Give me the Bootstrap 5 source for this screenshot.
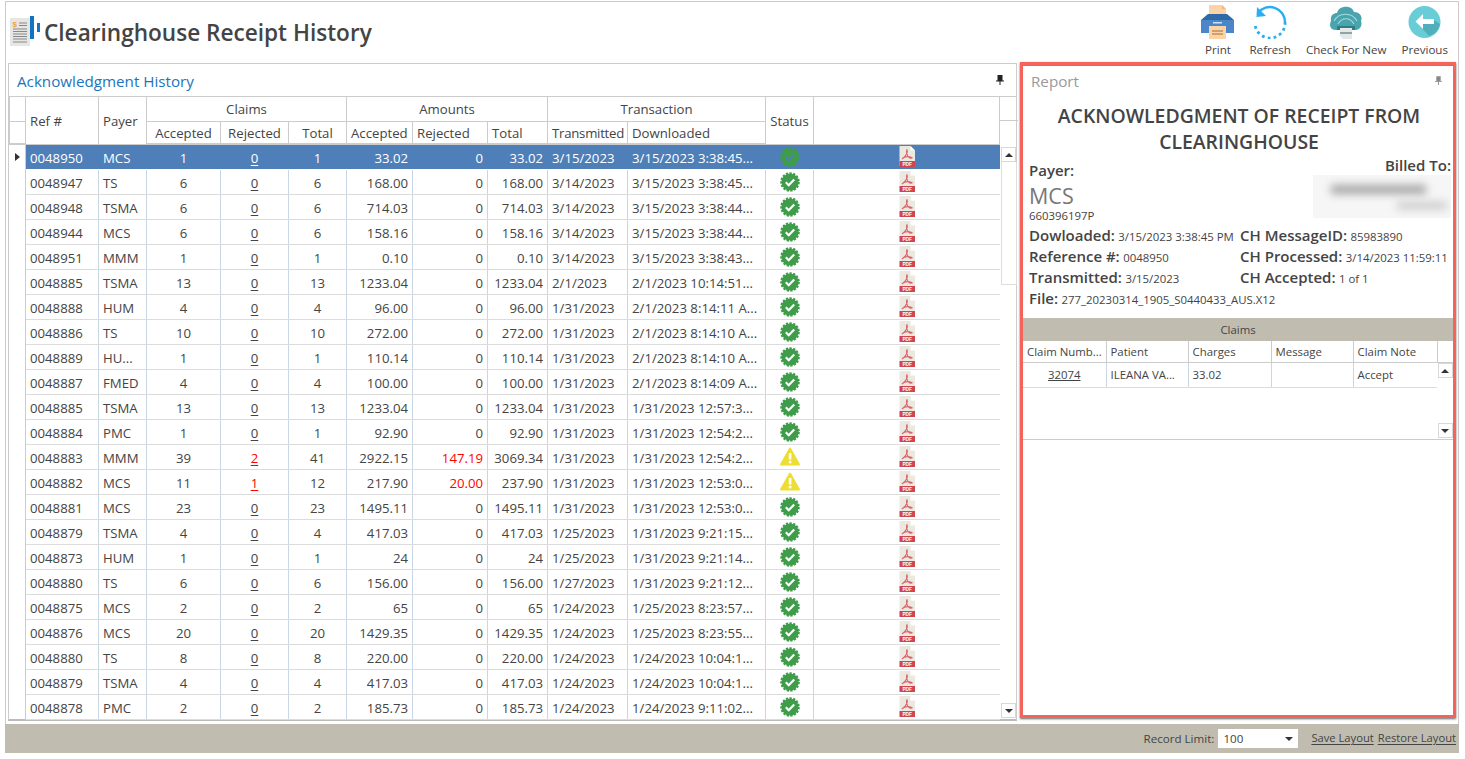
<!DOCTYPE html>
<html lang="en">
<head>
<meta charset="utf-8">
<title>Clearinghouse Receipt History</title>
<link href="https://cdn.jsdelivr.net/npm/bootstrap@5.3.0/dist/css/bootstrap.min.css" rel="stylesheet">
<style>
html,body{height:100%;overflow:hidden;background:#fff}
body{font-family:"Open Sans","Noto Sans",sans-serif;font-size:13.2px;color:#444;padding:1px 6px 0 5px}
.app-frame{height:723px;border:1px solid #ccc;border-bottom:0;padding-left:2px;padding-right:2px}
.top-bar{height:60px}
.title-wrap{padding:14px 0 0 2px}
.title-ico{margin-right:4px}
.app-title{font-size:22.6px;font-weight:600;color:#444;margin:0;line-height:1;padding-top:4px}
.tool-item{color:#444;font-size:11.6px;text-decoration:none;line-height:1;gap:5px}
.tool-strip{gap:15px;padding-right:8px;padding-top:3px}
.tool-item svg{display:block}
.main-row{height:660px}
.hist-panel{width:1009px;height:658px;margin-top:1px;border:1px solid #ccc;border-bottom:2px solid #bbb;background:#fff}
.panel-head{height:32px;padding:0 8px;flex:none}
.hist-title{font-size:15.2px;color:#1b75bc;padding-top:2px}
.hist-pin{margin-right:4px;margin-top:-1px;color:#222}
.rep-title{font-size:15.2px;color:#999;padding-top:2px}
.rep-pin{color:#888;margin-right:1px}
.grid-wrap{border-top:1px solid #ccc;flex:1;min-height:0}
.hist-table{table-layout:fixed;width:990px;margin:0;border-collapse:collapse;color:#444}
.hist-table th,.hist-table td{padding:2px 4px 0;font-weight:400;white-space:nowrap;overflow:hidden;vertical-align:middle;background:transparent;color:inherit;box-shadow:none;line-height:1}
.hist-table thead th{height:24px;border:1px solid #ccc;border-top:0;text-align:center;font-size:13.2px}
.hist-table thead th.lft{text-align:left}
.hist-table thead tr:last-child th{height:23px;border-bottom:2px solid #ccc}
.hist-table thead th.tight{letter-spacing:-.25px}
.hist-table tbody td{height:25px;padding-top:4px;border:0;border-right:1px solid #c9d6e3;border-bottom:1px solid #dcdcdc}
.hist-table td.ctr{text-align:center}
.hist-table td.rgt{text-align:right}
.hist-table tbody td.rowhd{border-bottom:0;border-right:1px solid #ccc;padding:0 0 0 5px}
.hist-table tbody td.iconcell{padding:0;text-align:center;border-right:0}
.hist-table td.iconcell svg,.hist-table td.statcell svg{display:inline-block;vertical-align:middle}
.hist-table tbody td.statcell{padding:0;text-align:center}
.hist-table td u{text-underline-offset:2px}
.hist-table tr.sel td{background:#4e7fb9;color:#fff;border-bottom-color:#fff;border-right-color:#4e7fb9;--chk:#4e7fb9}
.hist-table tr.sel td.rowhd{background:#fff;color:#444;border-right-color:#ccc}
.hist-table .redv{color:#f00}
.side-col{width:18px;flex:none;display:flex;flex-direction:column}
.side-cell{height:24px;border-bottom:1px solid #ccc;flex:none}
.side-cell+.side-cell{border-bottom:0}
.vtrack{flex:1;display:flex;flex-direction:column;padding:2px 1px 1px 1px;min-height:0}
.arr-btn{height:15px;width:15px;border:1px solid #d8d8d8;background:#fff;display:flex;align-items:center;justify-content:center;flex:none}
.vthumb{height:123px;border:1px solid #ddd;border-top:0;flex:none}
.rep-panel{width:436px;height:656px;border:3px solid #f4645a;box-shadow:0 1px 2px #666,inset 0 1px 0 #888;background:#fff;flex:none;margin-left:3px}
.rep-head{height:31px;padding:0 10px 0 8px;flex:none}
.rep-h1{font-size:19.4px;font-weight:600;line-height:26px;text-align:center;margin:7px 0 0 2px;color:#444}
.rep-body{padding:0 2px 0 6px;height:163px}
.lbl{font-size:15px;font-weight:600;color:#444;white-space:nowrap}
.val{font-size:11.4px;color:#444;white-space:nowrap}
.payer-box{height:68px}
.payer-left{padding-top:4px}
.payer-name{font-size:21.5px;color:#777;line-height:1.1;margin-top:2px}
.billed{width:138px;text-align:right}
.billed-lbl{line-height:20px}
.blurbox{height:43px;background:#f6f6f6;overflow:hidden;margin-top:0;padding-top:10px}
.blur1{height:9px;width:95px;margin-left:18px;background:#a5a5a5;filter:blur(4px)}
.blur2{height:7px;width:50px;margin-left:84px;margin-top:8px;background:#c8c8c8;filter:blur(4px)}
.info-row{padding-top:2px}
.info-line{height:21px;line-height:21px}
.sec-bar{height:23px;background:#c0bdb0;font-size:11.4px;text-align:center;line-height:23px;color:#444;margin-top:0}
.claim-wrap{height:99px;border-bottom:1px solid #ccc}
.claim-table{table-layout:fixed;width:414px;margin:0;border-collapse:collapse;color:#444;font-size:11.4px}
.claim-table th,.claim-table td{font-weight:400;padding:1px 4px 0;white-space:nowrap;overflow:hidden;background:transparent;color:inherit;box-shadow:none;line-height:1;vertical-align:middle}
.claim-table th{height:21px;border:0;border-right:1px solid #ccc;border-bottom:1px solid #ccc}
.claim-table td{height:25px;border:0;border-right:1px solid #c9d6e3;border-bottom:1px solid #dcdcdc}
.claim-table td:last-child{border-right:0}
.claim-track{width:15px;flex:none;display:flex;flex-direction:column;padding-bottom:1px}
.claim-corner{height:22px;border-bottom:1px solid #ccc;flex:none}
.claim-gap{flex:1}
.foot-bar{height:29px;background:#c0bdb0;font-size:11.6px;padding-right:3px;color:#444}
.rec-sel{width:80px;height:19px;background:#fff;padding:0 5px;margin:0 13px 0 4px;line-height:19px}
.foot-bar a{color:#444;font-size:11.2px;text-decoration:underline;text-underline-offset:2px}
</style>
</head>
<body>
<svg width="0" height="0" class="position-absolute">
<defs>
<symbol id="ok" viewBox="0 0 20 20"><circle cx="10" cy="10" r="8.6" fill="#3f9c4a"/><circle cx="10" cy="10" r="8.8" fill="none" stroke="#3f9c4a" stroke-width="2" stroke-dasharray="2.3 1.4"/><path d="M5.8 10.3l2.9 2.9 5.500-5.800" fill="none" style="stroke:var(--chk,#fff)" stroke-width="2.200"/></symbol>
<symbol id="warn" viewBox="0 0 20 20"><path d="M10 1.500L19 17.500H1Z" fill="#eedd33" stroke="#eedd33" stroke-width="2" stroke-linejoin="round"/><rect x="8.800" y="6" width="2.600" height="6.500" fill="#fff"/><circle cx="10.100" cy="15" r="1.500" fill="#fff"/></symbol>
<symbol id="pdf" viewBox="0 0 16 21"><path d="M.5 0H11.500L16 4.500V20H.5Z" fill="#ebe9df"/><path d="M11.500 0L16 4.500H11.500Z" fill="#fff"/><path d="M8 3.500C7 6 8 9 9.500 11c1 1 3 1.200 4 .8M8 3.500C9 6 7.500 10 3 13M3 13c2-2.200 6-3 10.500-1.200" fill="none" stroke="#d8636a" stroke-width="1.100"/><rect x=".5" y="15" width="15.500" height="6" fill="#d0454e"/><text x="8.200" y="20" text-anchor="middle" font-family="Liberation Sans" font-size="4.800" font-weight="700" fill="#fff">PDF</text></symbol>
<symbol id="pin" viewBox="0 0 8 10"><path d="M1.500 0H6.500V5.500H8V6.500H4.500V10H3.500V6.500H0V5.500H1.500Z" fill="currentColor"/></symbol>
<symbol id="up" viewBox="0 0 8 4"><path d="M0 4L4 0L8 4Z" fill="#333"/></symbol>
<symbol id="dn" viewBox="0 0 8 4"><path d="M0 0L8 0L4 4Z" fill="#333"/></symbol>
</defs>
</svg>

<div class="app-frame d-flex flex-column">
  <div class="top-bar d-flex justify-content-between align-items-start">
    <div class="title-wrap d-flex align-items-center">
      <svg width="30" height="30" viewBox="0 0 30 30" class="title-ico">
        <path d="M0 2H20V30H0Z" fill="#e6e6e4"/>
        <text x="2.500" y="11" font-family="Liberation Sans" font-size="8" font-weight="700" fill="#f2a33a">$</text>
        <path d="M9 7h8M9 9.500h8M3 13h14M3 15.500h14M3 18h14M3 20.500h14M3 23h14M3 26h14" stroke="#888" stroke-width="1"/>
        <rect x="20" y="0" width="4" height="23" fill="#0f74c4"/>
        <rect x="27" y="7" width="3" height="9" fill="#0f74c4"/>
      </svg>
      <h1 class="app-title">Clearinghouse Receipt History</h1>
    </div>
    <div class="tool-strip d-flex align-items-start">
      <a class="tool-item d-flex flex-column align-items-center" href="#">
        <svg width="33" height="34" viewBox="0 0 33 34"><path d="M8 0H21L25 4V11H8Z" fill="#fbd3a6"/><path d="M21 0L25 4H21Z" fill="#f0b77f"/><path d="M7 9H26L33 15V28H0V15Z" fill="#2f6aa8"/><path d="M0 15H33V28H0Z" fill="#4b87c8"/><rect x="12" y="17" width="9" height="1.500" fill="#cfe2f5"/><path d="M8 21H25V34H8Z" fill="#fbd3a6"/><path d="M11 26h11M11 29h11" stroke="#c28f58" stroke-width="1.300"/></svg>
        <span>Print</span>
      </a>
      <a class="tool-item d-flex flex-column align-items-center" href="#">
        <svg width="34" height="34" viewBox="0 0 34 34"><path d="M5 8A15 15 0 0 1 32 17" fill="none" stroke="#29aef3" stroke-width="2.400"/><path d="M4 2L3.500 12L13 11Z" fill="#29aef3"/><path d="M32 17A15 15 0 0 1 2 19" fill="none" stroke="#29aef3" stroke-width="2.800" stroke-dasharray="2.800 3.200"/></svg>
        <span>Refresh</span>
      </a>
      <a class="tool-item d-flex flex-column align-items-center" href="#">
        <svg width="34" height="34" viewBox="0 0 34 34"><path d="M7 25C1 25 0 20 2 16C1 10 5 8 8 8C10 0 23 0 25 7C31 7 34 12 32 16C34 21 30 25 27 25Z" fill="#4aa4ae"/><path d="M5 16C10 7 23 7 28 16M9 19C13 12 21 12 25 19" fill="none" stroke="#a5dbe0" stroke-width="1.100"/><rect x="8" y="21" width="18" height="4" fill="#2f7c85"/><path d="M11 23H23V34H14L11 31Z" fill="#e4e8e6"/><path d="M11 28H23" stroke="#8fa5a5" stroke-width="2"/></svg>
        <span>Check For New</span>
      </a>
      <a class="tool-item d-flex flex-column align-items-center" href="#">
        <svg width="33" height="34" viewBox="0 0 33 34"><circle cx="16.500" cy="17" r="16" fill="#68cdd7"/><path d="M9 18L21 31A16 16 0 0 0 32 19L26 15H14Z" fill="#4fb0bb"/><path d="M15 9L7.500 16.500L15 24V19H26V14H15Z" fill="#fff"/></svg>
        <span>Previous</span>
      </a>
    </div>
  </div>

  <div class="main-row d-flex align-items-start">
    <section class="hist-panel d-flex flex-column">
      <div class="panel-head d-flex justify-content-between align-items-center">
        <span class="hist-title">Acknowledgment History</span>
        <svg width="8" height="10" class="hist-pin"><use href="#pin"/></svg>
      </div>
      <div class="grid-wrap d-flex">
        <table class="table hist-table">
          <colgroup>
            <col style="width:16px"><col style="width:73px"><col style="width:48px"><col style="width:74px"><col style="width:68px"><col style="width:58px"><col style="width:66px"><col style="width:75px"><col style="width:60px"><col style="width:80px"><col style="width:138px"><col style="width:48px"><col style="width:186px">
          </colgroup>
          <thead>
            <tr>
              <th></th><th rowspan="2" class="lft">Ref #</th><th rowspan="2" class="lft">Payer</th><th colspan="3">Claims</th><th colspan="3">Amounts</th><th colspan="2">Transaction</th><th rowspan="2">Status</th><th rowspan="2"></th>
            </tr>
            <tr>
              <th></th><th>Accepted</th><th>Rejected</th><th>Total</th><th class="lft">Accepted</th><th class="lft">Rejected</th><th class="lft">Total</th><th class="lft tight">Transmitted</th><th class="lft">Downloaded</th>
            </tr>
          </thead>
          <tbody id="rows"></tbody>
        </table>
        <div class="side-col">
          <div class="side-cell"></div>
          <div class="side-cell"></div>
          <div class="vtrack">
            <div class="arr-btn"><svg width="8" height="4"><use href="#up"/></svg></div>
            <div class="vthumb"></div>
            <div class="flex-grow-1"></div>
            <div class="arr-btn"><svg width="8" height="4"><use href="#dn"/></svg></div>
          </div>
        </div>
      </div>
    </section>

    <section class="rep-panel d-flex flex-column">
      <div class="rep-head d-flex justify-content-between align-items-center">
        <span class="rep-title">Report</span>
        <svg width="7" height="9" class="rep-pin"><use href="#pin"/></svg>
      </div>
      <h2 class="rep-h1">ACKNOWLEDGMENT OF RECEIPT FROM<br>CLEARINGHOUSE</h2>
      <div class="rep-body">
        <div class="payer-box d-flex justify-content-between">
          <div class="payer-left">
            <div class="lbl">Payer:</div>
            <div class="payer-name">MCS</div>
            <div class="val">660396197P</div>
          </div>
          <div class="billed">
            <div class="lbl billed-lbl">Billed To:</div>
            <div class="blurbox"><div class="blur1"></div><div class="blur2"></div></div>
          </div>
        </div>
        <div class="row g-0 info-row">
          <div class="col-6">
            <div class="info-line"><span class="lbl">Dowloaded:</span> <span class="val">3/15/2023 3:38:45 PM</span></div>
            <div class="info-line"><span class="lbl">Reference #:</span> <span class="val">0048950</span></div>
            <div class="info-line"><span class="lbl">Transmitted:</span> <span class="val">3/15/2023</span></div>
          </div>
          <div class="col-6">
            <div class="info-line"><span class="lbl">CH MessageID:</span> <span class="val">85983890</span></div>
            <div class="info-line"><span class="lbl">CH Processed:</span> <span class="val">3/14/2023 11:59:11</span></div>
            <div class="info-line"><span class="lbl">CH Accepted:</span> <span class="val">1 of 1</span></div>
          </div>
        </div>
        <div class="info-line"><span class="lbl">File:</span> <span class="val">277_20230314_1905_S0440433_AUS.X12</span></div>
      </div>
      <div class="sec-bar">Claims</div>
      <div class="claim-wrap d-flex">
        <table class="table claim-table align-self-start">
          <colgroup><col style="width:83px"><col style="width:82px"><col style="width:83px"><col style="width:82px"><col style="width:84px"></colgroup>
          <thead><tr><th>Claim Numb...</th><th>Patient</th><th>Charges</th><th>Message</th><th>Claim Note</th></tr></thead>
          <tbody><tr><td class="text-center"><u>32074</u></td><td>ILEANA VA...</td><td>33.02</td><td></td><td>Accept</td></tr></tbody>
        </table>
        <div class="claim-track">
          <div class="claim-corner"></div>
          <div class="arr-btn"><svg width="8" height="4"><use href="#up"/></svg></div>
          <div class="claim-gap"></div>
          <div class="arr-btn"><svg width="8" height="4"><use href="#dn"/></svg></div>
        </div>
      </div>
    </section>
  </div>
</div>
<footer class="foot-bar d-flex justify-content-end align-items-center">
  <span>Record Limit:</span>
  <div class="rec-sel d-flex justify-content-between align-items-center"><span>100</span><svg width="8" height="4"><use href="#dn"/></svg></div>
  <a href="#" class="me-1">Save Layout</a><a href="#">Restore Layout</a>
</footer>

<script>
var data=[
["0048950","MCS",1,0,1,"33.02","0","33.02","3/15/2023","3/15/2023 3:38:45...",0],
["0048947","TS",6,0,6,"168.00","0","168.00","3/14/2023","3/15/2023 3:38:45...",0],
["0048948","TSMA",6,0,6,"714.03","0","714.03","3/14/2023","3/15/2023 3:38:44...",0],
["0048944","MCS",6,0,6,"158.16","0","158.16","3/14/2023","3/15/2023 3:38:44...",0],
["0048951","MMM",1,0,1,"0.10","0","0.10","3/14/2023","3/15/2023 3:38:43...",0],
["0048885","TSMA",13,0,13,"1233.04","0","1233.04","2/1/2023","2/1/2023 10:14:51...",0],
["0048888","HUM",4,0,4,"96.00","0","96.00","1/31/2023","2/1/2023 8:14:11 A...",0],
["0048886","TS",10,0,10,"272.00","0","272.00","1/31/2023","2/1/2023 8:14:10 A...",0],
["0048889","HU...",1,0,1,"110.14","0","110.14","1/31/2023","2/1/2023 8:14:10 A...",0],
["0048887","FMED",4,0,4,"100.00","0","100.00","1/31/2023","2/1/2023 8:14:09 A...",0],
["0048885","TSMA",13,0,13,"1233.04","0","1233.04","1/31/2023","1/31/2023 12:57:3...",0],
["0048884","PMC",1,0,1,"92.90","0","92.90","1/31/2023","1/31/2023 12:54:2...",0],
["0048883","MMM",39,2,41,"2922.15","147.19","3069.34","1/31/2023","1/31/2023 12:54:2...",1],
["0048882","MCS",11,1,12,"217.90","20.00","237.90","1/31/2023","1/31/2023 12:53:0...",1],
["0048881","MCS",23,0,23,"1495.11","0","1495.11","1/31/2023","1/31/2023 12:53:0...",0],
["0048879","TSMA",4,0,4,"417.03","0","417.03","1/25/2023","1/31/2023 9:21:15...",0],
["0048873","HUM",1,0,1,"24","0","24","1/25/2023","1/31/2023 9:21:14...",0],
["0048880","TS",6,0,6,"156.00","0","156.00","1/27/2023","1/31/2023 9:21:12...",0],
["0048875","MCS",2,0,2,"65","0","65","1/24/2023","1/25/2023 8:23:57...",0],
["0048876","MCS",20,0,20,"1429.35","0","1429.35","1/24/2023","1/25/2023 8:23:55...",0],
["0048880","TS",8,0,8,"220.00","0","220.00","1/24/2023","1/24/2023 10:04:1...",0],
["0048879","TSMA",4,0,4,"417.03","0","417.03","1/24/2023","1/24/2023 10:04:1...",0],
["0048878","PMC",2,0,2,"185.73","0","185.73","1/24/2023","1/24/2023 9:11:02...",0]];
document.getElementById("rows").innerHTML=data.map(function(r,i){
  var red=r[3]>0?' class="redv"':'';
  return '<tr'+(i==0?' class="sel"':'')+'>'+
  '<td class="rowhd">'+(i==0?'<svg width="5" height="8" style="display:block"><path d="M0 0L5 4L0 8Z" fill="#333"/></svg>':'')+'</td>'+
  '<td>'+r[0]+'</td><td>'+r[1]+'</td><td class="ctr">'+r[2]+'</td>'+
  '<td class="ctr"><u'+red+'>'+r[3]+'</u></td><td class="ctr">'+r[4]+'</td>'+
  '<td class="rgt">'+r[5]+'</td><td class="rgt"><span'+red+'>'+r[6]+'</span></td><td class="rgt">'+r[7]+'</td>'+
  '<td>'+r[8]+'</td><td>'+r[9]+'</td>'+
  '<td class="statcell"><svg width="20" height="20"><use href="#'+(r[10]?'warn':'ok')+'"/></svg></td>'+
  '<td class="iconcell"><svg width="16" height="21"><use href="#pdf"/></svg></td></tr>';
}).join("");
</script>
<script src="https://cdn.jsdelivr.net/npm/bootstrap@5.3.0/dist/js/bootstrap.bundle.min.js"></script>
</body>
</html>
